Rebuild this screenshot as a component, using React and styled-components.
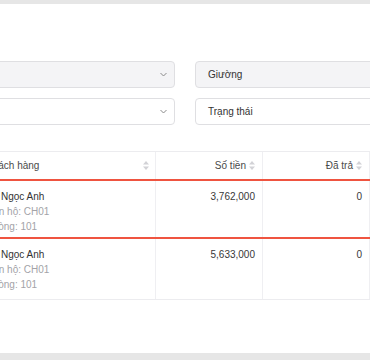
import React from "react";
import styled, { createGlobalStyle } from "styled-components";

const GlobalStyle = createGlobalStyle`
  html, body { margin: 0; padding: 0; }
  body {
    background: #e6e6e6;
    font-family: "Liberation Sans", Arial, sans-serif;
    overflow: hidden;
  }
`;

const Viewport = styled.div`
  width: 370px;
  height: 360px;
  overflow: hidden;
  padding-top: 4px;
  box-sizing: border-box;
`;

const Card = styled.div`
  background: #ffffff;
  height: 349px;
  width: 626px;
  margin-left: -128px;
  padding: 57px 24px 0;
  box-sizing: border-box;
`;

const Filters = styled.div`
  display: grid;
  grid-template-columns: 1fr 1fr;
  column-gap: 20px;
  row-gap: 10px;
`;

const Select = styled.div`
  height: 27px;
  box-sizing: border-box;
  border: 1px solid #dfdfe2;
  border-radius: 4px;
  background: ${(p) => (p.$disabled ? "#f4f4f6" : "#ffffff")};
  display: flex;
  align-items: center;
  justify-content: space-between;
  padding: 0 7px 0 12px;
  font-size: 10px;
  color: #333333;
`;

const Chevron = () => (
  <svg width="7" height="5" viewBox="0 0 7 5">
    <polyline points="0.5,1 3.5,4 6.5,1" fill="none" stroke="#8a8a8a" strokeWidth="1" />
  </svg>
);

const Table = styled.div`
  margin-top: 26px;
  border-top: 1px solid #ececef;
`;

const COLS = "78px 181px 107px 107px 1fr";

const Row = styled.div`
  display: grid;
  grid-template-columns: ${COLS};
  border-top: ${(p) => (p.$selected ? "2px solid #ef5440" : "none")};
  border-bottom: ${(p) =>
    p.$selected ? "2px solid #ef5440" : p.$last ? "1px solid #ececef" : "none"};
`;

const HeadCell = styled.div`
  height: 27px;
  box-sizing: border-box;
  display: flex;
  align-items: center;
  justify-content: ${(p) => (p.$num ? "flex-end" : "space-between")};
  gap: 3px;
  padding: ${(p) => (p.$num ? "0 7px 0 10px" : "0 6px 0 11px")};
  font-size: 10px;
  color: #4a4a4a;
  border-left: ${(p) => (p.$first ? "none" : "1px solid #efeff2")};
`;

const Cell = styled.div`
  height: ${(p) => p.$h}px;
  box-sizing: border-box;
  padding: ${(p) => (p.$num ? "8px 7px 0 10px" : "8px 7px 0 11px")};
  text-align: ${(p) => (p.$num ? "right" : "left")};
  font-size: 10px;
  line-height: 15px;
  color: #383838;
  border-left: ${(p) => (p.$first ? "none" : "1px solid #efeff2")};
`;

const Name = styled.div`
  color: #333333;
`;

const Sub = styled.div`
  color: #a3a3a8;
`;

const SortIcon = () => (
  <svg width="6" height="9" viewBox="0 0 6 9">
    <polygon points="3,0 6,3.5 0,3.5" fill="#d2d2d6" />
    <polygon points="0,5.5 6,5.5 3,9" fill="#d2d2d6" />
  </svg>
);

const rows = [
  { id: "BK001", name: "Vũ Ngọc Anh", apt: "CH01", room: "101", amount: "3,762,000", paid: "0", selected: true, h: 56 },
  { id: "BK002", name: "Vũ Ngọc Anh", apt: "CH01", room: "101", amount: "5,633,000", paid: "0", selected: false, h: 60 },
];

export default function App() {
  return (
    <>
      <GlobalStyle />
      <Viewport>
        <Card>
          <Filters>
            <Select $disabled>
              <span>Căn hộ</span>
              <Chevron />
            </Select>
            <Select $disabled>
              <span>Giường</span>
              <Chevron />
            </Select>
            <Select>
              <span>Tất cả trạng thái đặt</span>
              <Chevron />
            </Select>
            <Select>
              <span>Trạng thái</span>
              <Chevron />
            </Select>
          </Filters>
          <Table>
            <Row>
              <HeadCell $first>
                <span>Mã</span>
                <SortIcon />
              </HeadCell>
              <HeadCell>
                <span>Khách hàng</span>
                <SortIcon />
              </HeadCell>
              <HeadCell $num>
                <span>Số tiền</span>
                <SortIcon />
              </HeadCell>
              <HeadCell $num>
                <span>Đã trả</span>
                <SortIcon />
              </HeadCell>
              <HeadCell $num>
                <span>Còn lại</span>
                <SortIcon />
              </HeadCell>
            </Row>
            {rows.map((r, i) => (
              <Row key={r.id} $selected={r.selected} $last={i === rows.length - 1}>
                <Cell $first $h={r.h}>{r.id}</Cell>
                <Cell $h={r.h}>
                  <Name>{r.name}</Name>
                  <Sub>Căn hộ: {r.apt}</Sub>
                  <Sub>Phòng: {r.room}</Sub>
                </Cell>
                <Cell $num $h={r.h}>{r.amount}</Cell>
                <Cell $num $h={r.h}>{r.paid}</Cell>
                <Cell $num $h={r.h}>{r.amount}</Cell>
              </Row>
            ))}
          </Table>
        </Card>
      </Viewport>
    </>
  );
}
